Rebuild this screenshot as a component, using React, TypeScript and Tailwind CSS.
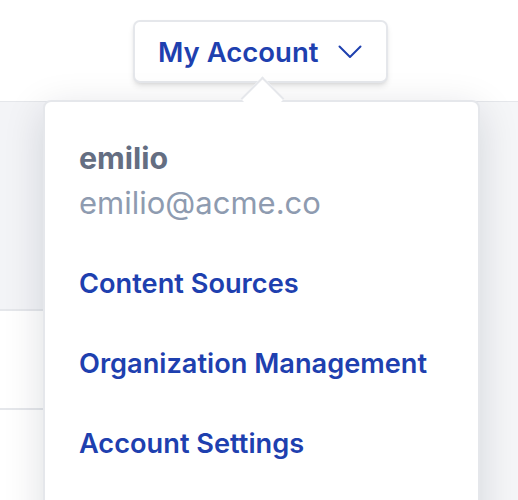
import React from "react";

export default function App() {
  return (
    <div
      className="relative w-[518px] h-[500px] overflow-hidden bg-white"
      style={{ fontFamily: "Inter, 'Noto Sans', sans-serif" }}
    >
      {/* header */}
      <div className="h-[102px] bg-white border-b border-gray-200 flex justify-center pt-[20px]">
        <button className="h-[63px] w-[255px] ml-[3px] rounded-[7px] border-2 border-gray-200 bg-white shadow-md flex items-center pl-[23px] gap-[20px]">
          <span className="text-[27.5px] leading-8 font-semibold text-[#1e40af]">My Account</span>
          <svg width="24" height="14" viewBox="0 0 24 14" fill="none">
            <path d="M1.5 1.5 L12 12 L22.5 1.5" stroke="#1e40af" strokeWidth="2" strokeLinecap="round" strokeLinejoin="round" />
          </svg>
        </button>
      </div>
      {/* content under header */}
      <div className="flex h-[398px]">
        <div className="w-[60px] flex flex-col">
          <div className="h-[209px] bg-[#f3f4f7] border-b-2 border-gray-200"></div>
          <div className="h-[99px] bg-white border-b-2 border-gray-200"></div>
          <div className="flex-1 bg-white"></div>
        </div>
        <div className="flex-1 bg-[#f5f6f8]"></div>
      </div>

      {/* dropdown panel */}
      <div className="absolute left-[43px] top-[100px] w-[437px] h-[440px] rounded-[8px] border-2 border-gray-200 bg-white shadow-[0_10px_40px_rgba(15,23,42,0.14)]">
        <div className="absolute left-[202px] top-[-19px] w-[31px] h-[31px] rotate-45 bg-white border-l-2 border-t-2 border-gray-200"></div>
        <div className="relative flex flex-col pl-[34px] pt-[40px]">
          <div className="text-[30.4px] leading-8 font-bold text-[#646e82]">emilio</div>
          <div className="mt-[13px] text-[31px] leading-8 text-[#8e9bb0]">emilio@acme.co</div>
          <div className="mt-[25px] flex flex-col">
            <a className="py-6 text-[27.2px] leading-8 font-semibold text-[#1e40af]">Content Sources</a>
            <a className="py-6 text-[27.2px] leading-8 font-semibold text-[#1e40af]">Organization Management</a>
            <a className="py-6 text-[27.2px] leading-8 font-semibold text-[#1e40af]">Account Settings</a>
          </div>
        </div>
      </div>
    </div>
  );
}
